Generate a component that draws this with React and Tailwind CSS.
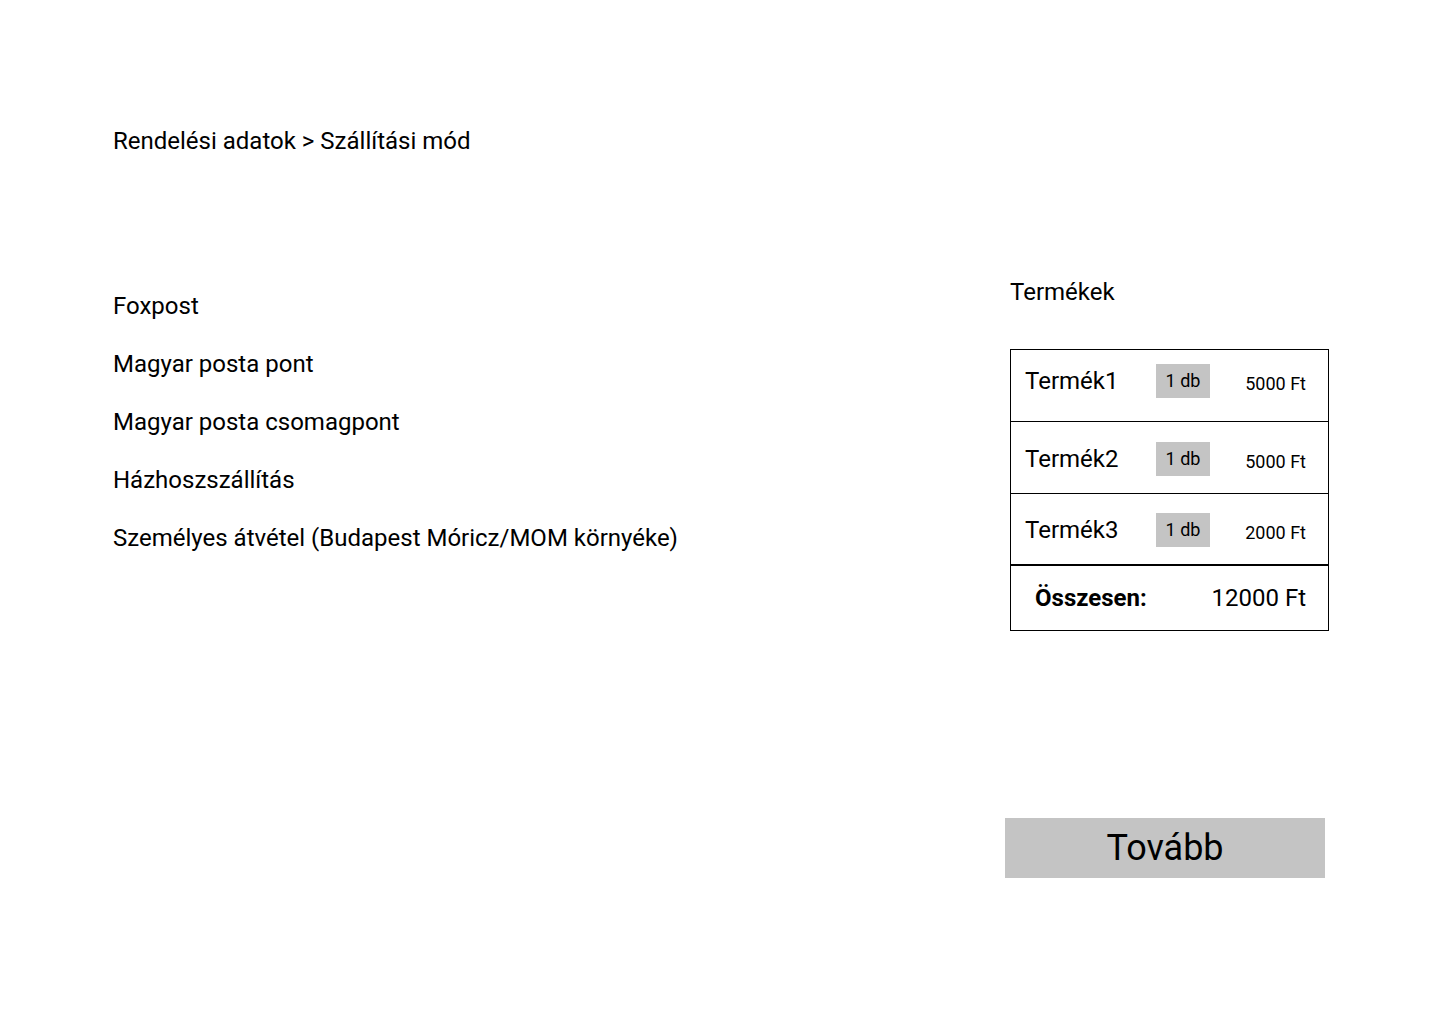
import React from "react";

const options = [
  "Foxpost",
  "Magyar posta pont",
  "Magyar posta csomagpont",
  "Házhoszszállítás",
  "Személyes átvétel (Budapest Móricz/MOM környéke)",
];

const products = [
  { name: "Termék1", qty: "1 db", price: "5000 Ft", shift: "-mt-[10px]" },
  { name: "Termék2", qty: "1 db", price: "5000 Ft", shift: "mt-[2px]" },
  { name: "Termék3", qty: "1 db", price: "2000 Ft", shift: "mt-[2px]" },
];

export default function App() {
  return (
    <div className="min-h-[1024px] w-[1440px] bg-white text-black font-['Roboto',sans-serif]">
      <div className="pl-[113px] pt-[127px] text-[24px] leading-[28px]">
        Rendelési adatok &gt; Szállítási mód
      </div>

      <div className="flex mt-[123px]">
        {/* Shipping options */}
        <div className="w-[1005px] pl-[113px] pt-[14px] flex flex-col gap-[30px]">
          {options.map((opt) => (
            <div key={opt} className="text-[24px] leading-[28px]">
              {opt}
            </div>
          ))}
        </div>

        {/* Cart summary */}
        <div className="w-[320px] flex flex-col">
          <div className="ml-[5px] text-[24px] leading-[28px]">Termékek</div>

          <div className="ml-[5px] mt-[43px] w-[319px] border border-black">
            {products.map((p, i) => (
              <div
                key={p.name}
                className={
                  i === products.length - 1
                    ? "h-[72px] border-b-2 border-black pl-[14px] pr-[22px] flex items-center"
                    : "h-[72px] border-b border-black pl-[14px] pr-[22px] flex items-center"
                }
              >
                <div className={"flex items-center w-full " + p.shift}>
                  <div className="w-[131px] text-[24px] leading-[28px]">{p.name}</div>
                  <div className="w-[54px] h-[34px] bg-[#c4c4c4] flex items-center justify-center text-[18px] leading-none">
                    {p.qty}
                  </div>
                  <div className="flex-1 text-right text-[18px] leading-none mt-[6px]">{p.price}</div>
                </div>
              </div>
            ))}
            <div className="h-[64px] flex items-center justify-between pl-[24px] pr-[22px]">
              <span className="text-[24px] font-bold leading-[28px]">Összesen:</span>
              <span className="text-[24px] leading-[28px]">12000 Ft</span>
            </div>
          </div>

          <button className="mt-[187px] w-[320px] h-[60px] bg-[#c4c4c4] text-[36px] leading-none flex items-center justify-center">
            Tovább
          </button>
        </div>
      </div>
    </div>
  );
}
